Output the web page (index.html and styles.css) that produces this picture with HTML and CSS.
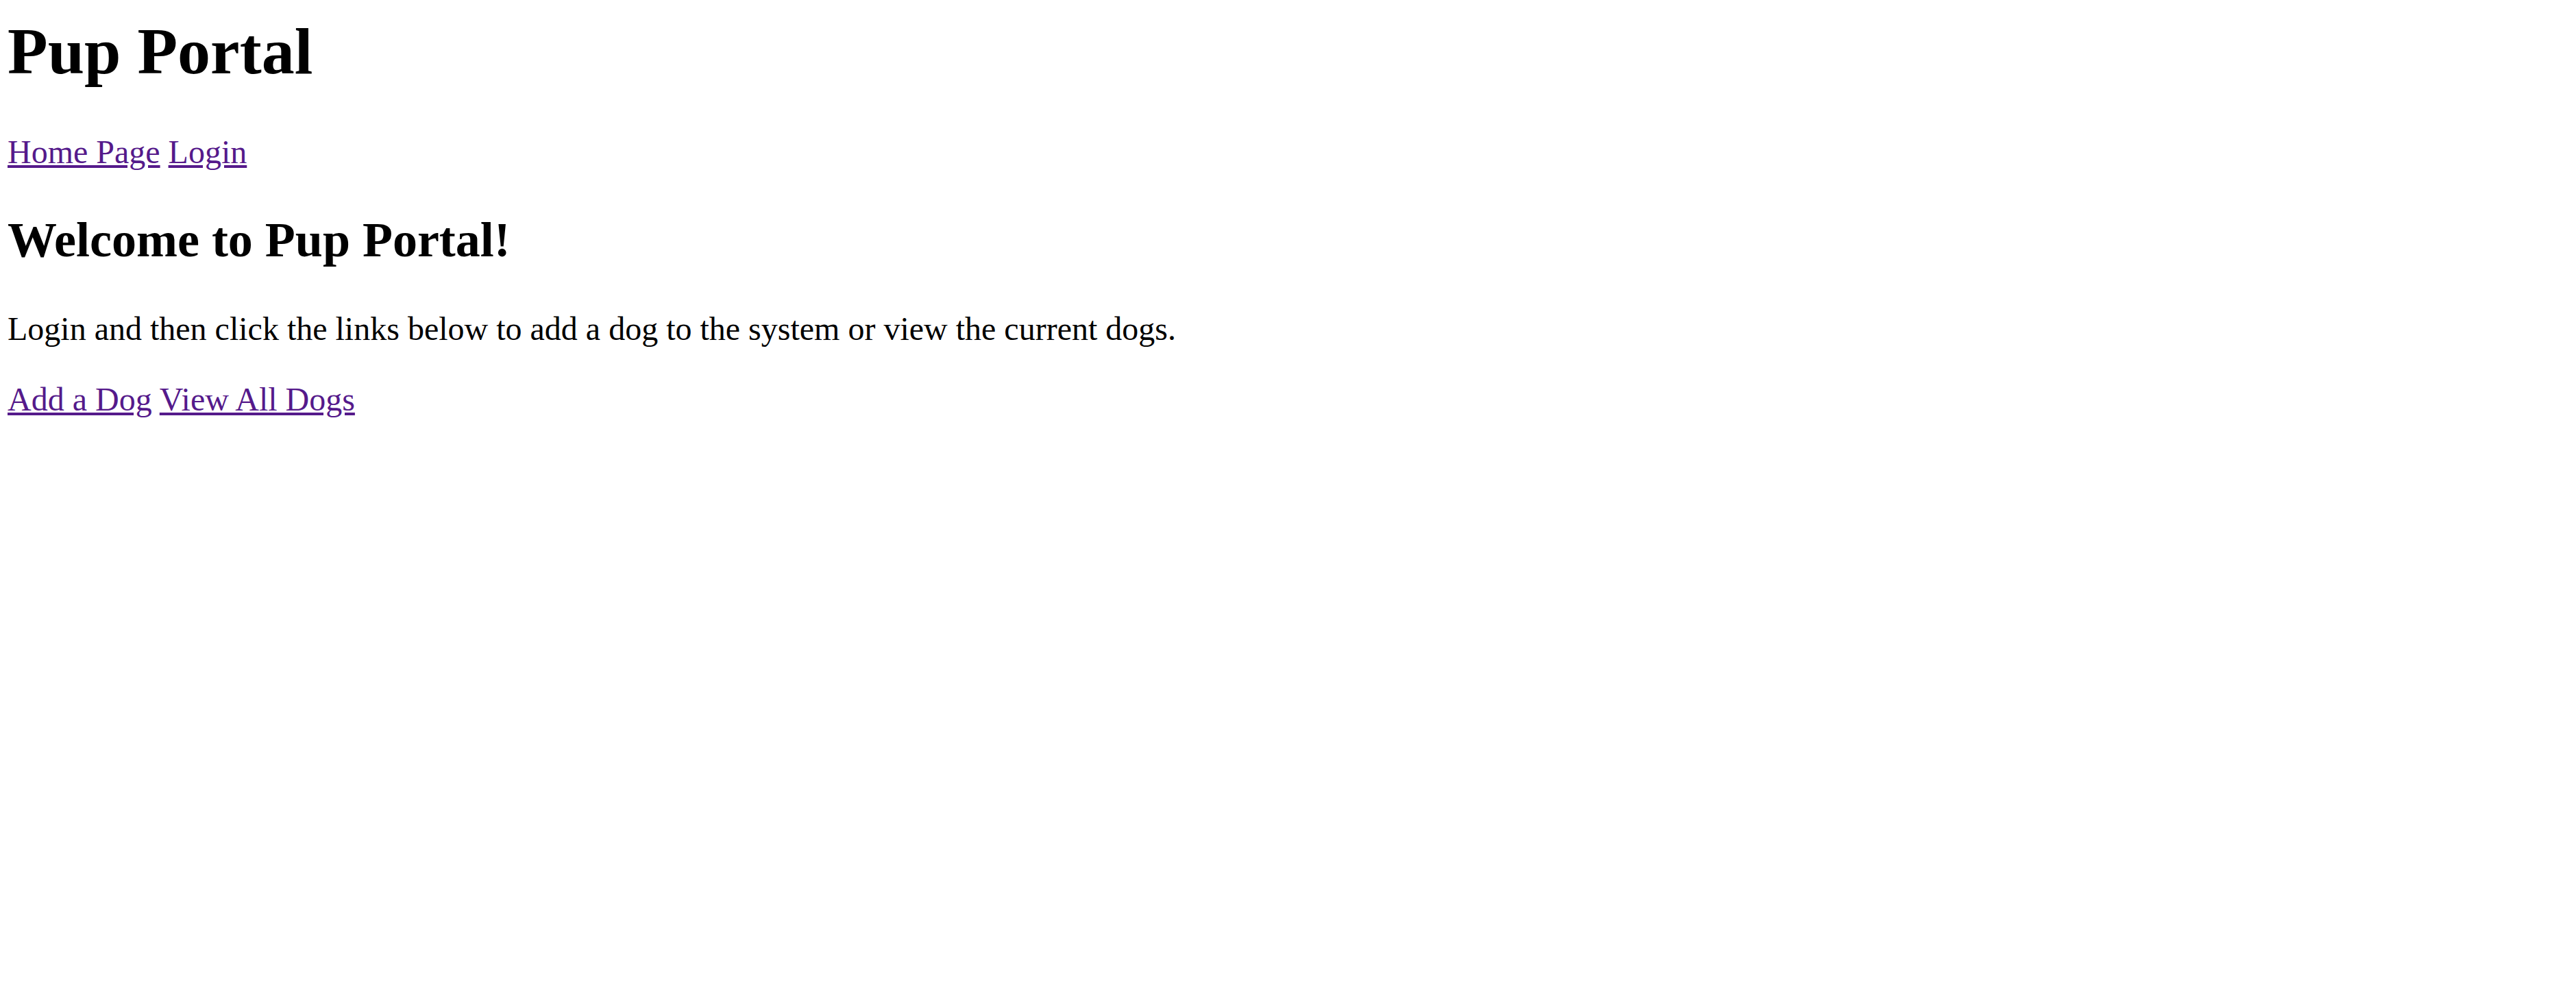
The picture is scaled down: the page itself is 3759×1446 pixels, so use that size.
FILE: index.html
```html
<!DOCTYPE html>
<html lang="en">
<head>
<meta charset="utf-8">
<title>Pup Portal</title>
<link rel="stylesheet" href="styles.css">
</head>
<body>
<h1 class="site-title">Pup Portal</h1>
<nav class="main-nav">
<a class="link" href="#">Home Page</a>
<a class="link" href="#">Login</a>
</nav>
<h2 class="welcome">Welcome to Pup Portal!</h2>
<p class="intro">Login and then click the links below to add a dog to the system or view the current dogs.</p>
<p class="actions">
<a class="link" href="#">Add a Dog</a>
<a class="link" href="#">View All Dogs</a>
</p>
</body>
</html>
```

FILE: styles.css
```css
html, body {
  background: #ffffff;
}
body {
  margin: 0;
  padding: 19px 0 0 11px;
  font-family: "Liberation Serif", "Times New Roman", serif;
  font-size: 48px;
  color: #000000;
}
.site-title {
  font-size: 96px;
  font-weight: bold;
  margin: 0 0 64px 0;
}
.main-nav {
  display: block;
  margin: 0;
}
.welcome {
  font-size: 72px;
  font-weight: bold;
  margin: 60px 0 60px 0;
}
.intro {
  margin: 0 0 48px 0;
}
.actions {
  margin: 0;
}
.link {
  color: #551a8b;
  text-decoration: underline;
}
```
